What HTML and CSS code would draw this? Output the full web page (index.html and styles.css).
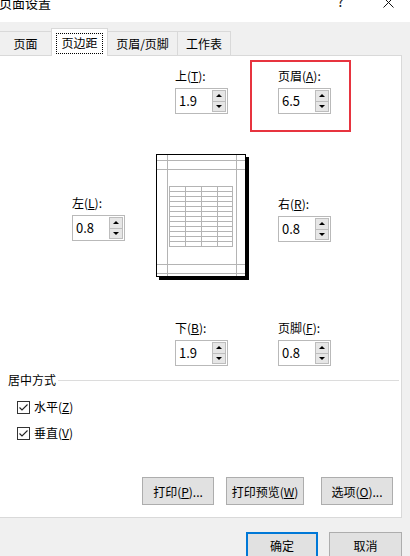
FILE: index.html
```html
<!DOCTYPE html>
<html lang="zh">
<head>
<meta charset="utf-8">
<title>页面设置</title>
<link rel="stylesheet" href="styles.css">
</head>
<body>
<div class="titlebar">
  <span class="title">页面设置</span>
  <span class="help">?</span>
  <svg class="close" width="11" height="11" viewBox="0 0 11 11"><path d="M0.5 0.5 L10.5 10.5 M10.5 0.5 L0.5 10.5" stroke="#111" stroke-width="1" fill="none"/></svg>
</div>
<div class="tabs">
  <div class="tab t1">页面</div>
  <div class="tab active"><span class="focus">页边距</span></div>
  <div class="tab t3">页眉/页脚</div>
  <div class="tab t4">工作表</div>
</div>
<div class="panel">
  <div class="row row-top">
    <div class="field f-top">
      <div class="label">上(<u>T</u>):</div>
      <div class="spin"><span class="val">1.9</span><span class="arrows"><span class="arr"><i class="up"></i></span><span class="arr"><i class="down"></i></span></span></div>
    </div>
    <div class="highlight">
      <div class="field">
        <div class="label">页眉(<u>A</u>):</div>
        <div class="spin"><span class="val">6.5</span><span class="arrows"><span class="arr"><i class="up"></i></span><span class="arr"><i class="down"></i></span></span></div>
      </div>
    </div>
  </div>
  <div class="row row-mid">
    <div class="field f-left">
      <div class="label">左(<u>L</u>):</div>
      <div class="spin"><span class="val">0.8</span><span class="arrows"><span class="arr"><i class="up"></i></span><span class="arr"><i class="down"></i></span></span></div>
    </div>
    <svg class="preview" width="93" height="126" viewBox="0 0 93 126">
      <rect x="90" y="3" width="3" height="123" fill="#000"/>
      <rect x="3" y="123" width="90" height="3" fill="#000"/>
      <rect x="0.5" y="0.5" width="89" height="122" fill="#fff" stroke="#000"/>
      <g stroke="#b4b4b4" stroke-width="1" fill="none">
        <path d="M11.5 1 V122 M80.5 1 V122 M1 6.5 H89 M1 15.5 H89 M1 110.5 H89 M1 119.5 H89"/>
        <rect x="13.5" y="32.5" width="63" height="60"/>
        <path d="M29.5 32 V93 M45.5 32 V93 M61.5 32 V93"/>
        <path d="M13 37.5 H77 M13 42.5 H77 M13 47.5 H77 M13 52.5 H77 M13 57.5 H77 M13 62.5 H77 M13 67.5 H77 M13 72.5 H77 M13 77.5 H77 M13 82.5 H77 M13 87.5 H77"/>
      </g>
    </svg>
    <div class="field f-right">
      <div class="label">右(<u>R</u>):</div>
      <div class="spin"><span class="val">0.8</span><span class="arrows"><span class="arr"><i class="up"></i></span><span class="arr"><i class="down"></i></span></span></div>
    </div>
  </div>
  <div class="row row-bot">
    <div class="field f-b1">
      <div class="label">下(<u>B</u>):</div>
      <div class="spin"><span class="val">1.9</span><span class="arrows"><span class="arr"><i class="up"></i></span><span class="arr"><i class="down"></i></span></span></div>
    </div>
    <div class="field f-b2">
      <div class="label">页脚(<u>F</u>):</div>
      <div class="spin"><span class="val">0.8</span><span class="arrows"><span class="arr"><i class="up"></i></span><span class="arr"><i class="down"></i></span></span></div>
    </div>
  </div>
  <div class="group">
    <div class="group-head"><span>居中方式</span><span class="rule"></span></div>
    <div class="checks">
      <label class="check"><svg width="13" height="13" viewBox="0 0 13 13"><rect x="0.5" y="0.5" width="12" height="12" fill="#fff" stroke="#333"/><path d="M2.5 6.5 L5 9 L10.5 3.5" stroke="#222" stroke-width="1.1" fill="none"/></svg><span>水平(<u>Z</u>)</span></label>
      <label class="check"><svg width="13" height="13" viewBox="0 0 13 13"><rect x="0.5" y="0.5" width="12" height="12" fill="#fff" stroke="#333"/><path d="M2.5 6.5 L5 9 L10.5 3.5" stroke="#222" stroke-width="1.1" fill="none"/></svg><span>垂直(<u>V</u>)</span></label>
    </div>
  </div>
  <div class="actions">
    <button class="btn b-print">打印(<u>P</u>)...</button>
    <button class="btn b-preview">打印预览(<u>W</u>)</button>
    <button class="btn b-options">选项(<u>O</u>)...</button>
  </div>
</div>
<div class="footer">
  <button class="btn b-ok">确定</button>
  <button class="btn b-cancel">取消</button>
</div>
</body>
</html>
```
FILE: styles.css
```css
* { box-sizing: border-box; }
html, body { margin: 0; padding: 0; }
body {
  width: 410px;
  height: 556px;
  overflow: hidden;
  background: #f0f0f0;
  font-family: "Noto Sans CJK SC", "Microsoft YaHei", sans-serif;
  font-size: 12px;
  color: #000;
}
u { text-decoration: underline; text-underline-offset: 1px; }

.titlebar {
  height: 22px;
  background: #fff;
  display: flex;
  align-items: flex-start;
  overflow: hidden;
}
.title { font-size: 13px; line-height: 16px; margin-top: -5px; margin-left: -1px; }
.help { margin-left: auto; font-size: 14px; line-height: 16px; margin-top: -7px; color: #222; }
.close { margin: -3px 16px 0 39px; }

.tabs {
  height: 33px;
  display: flex;
  align-items: flex-end;
  position: relative;
  z-index: 1;
}
.tab {
  height: 24px;
  border: 1px solid #d9d9d9;
  border-bottom: none;
  background: #f0f0f0;
  display: flex;
  align-items: center;
  justify-content: center;
  line-height: 16px;
}
.t1 { width: 53px; margin-left: -1px; }
.active {
  width: 57px;
  height: 28px;
  margin-left: -1px;
  margin-bottom: -1px;
  background: #fff;
}
.focus {
  width: 47px;
  height: 21px;
  border: 1px dotted #000;
  display: flex;
  align-items: center;
  justify-content: center;
  margin-top: 1px;
}
.t3 { width: 71px; margin-left: -1px; }
.t4 { width: 54px; margin-left: -1px; }

.panel {
  margin-left: -1px;
  width: 403px;
  height: 463px;
  border: 1px solid #d9d9d9;
  background: #fff;
}

.row { display: flex; align-items: flex-start; }
.row-top { padding-top: 4px; height: 76px; }
.row-mid { height: 146px; }
.row-bot { padding-top: 42px; }

.field { width: 53px; }
.label { height: 16px; line-height: 16px; margin-bottom: 4px; white-space: nowrap; }
.spin {
  width: 53px;
  height: 26px;
  border: 1px solid #b9b9b9;
  background: #fff;
  display: flex;
  align-items: center;
  justify-content: space-between;
  padding-left: 3px;
  font-size: 13px;
}
.val { line-height: 16px; }
.arrows {
  width: 14px;
  height: 22px;
  margin-right: 1px;
  display: flex;
  flex-direction: column;
}
.arr {
  flex: 1;
  background: #e6e6e6;
  border: 1px solid #bdbdbd;
  display: flex;
  align-items: center;
  justify-content: center;
}
.arr + .arr { border-top: none; }
.up { width: 0; height: 0; border-left: 3px solid transparent; border-right: 3px solid transparent; border-bottom: 3px solid #000; }
.down { width: 0; height: 0; border-left: 3px solid transparent; border-right: 3px solid transparent; border-top: 3px solid #000; }

.f-top { margin-left: 175px; margin-top: 8px; }
.highlight {
  margin-left: 22px;
  width: 101px;
  height: 72px;
  border: 2px solid #e7343f;
  padding: 6px 0 0 26px;
}
.f-left { margin-left: 72px; margin-top: 63px; }
.preview { margin-left: 31px; margin-top: 22px; flex: none; }
.f-right { margin-left: 29px; margin-top: 64px; }
.f-b1 { margin-left: 175px; }
.f-b2 { margin-left: 50px; }

.group { margin-top: 6px; }
.group-head {
  display: flex;
  align-items: center;
  height: 16px;
  line-height: 16px;
  padding-left: 8px;
}
.rule { flex: 1; height: 1px; background: #dcdcdc; margin: 0 2px 0 2px; }
.checks { padding-top: 11px; display: flex; flex-direction: column; gap: 10px; }
.check {
  display: flex;
  align-items: center;
  gap: 4px;
  padding-left: 17px;
  height: 16px;
  line-height: 16px;
}

.actions { display: flex; margin-top: 36px; }
.btn {
  height: 28px;
  background: #e1e1e1;
  border: 1px solid #adadad;
  font-family: inherit;
  font-size: 12px;
  color: #000;
  padding: 0;
  white-space: nowrap;
}
.b-print { margin-left: 142px; width: 72px; }
.b-preview { margin-left: 12px; width: 78px; }
.b-options { margin-left: 17px; width: 72px; }

.footer { display: flex; padding-top: 14px; }
.b-ok { margin-left: 246px; width: 72px; height: 26px; border-color: #0078d7; box-shadow: inset 0 0 0 1px #0078d7; }
.b-cancel { margin-left: 11px; width: 73px; height: 26px; }
```
